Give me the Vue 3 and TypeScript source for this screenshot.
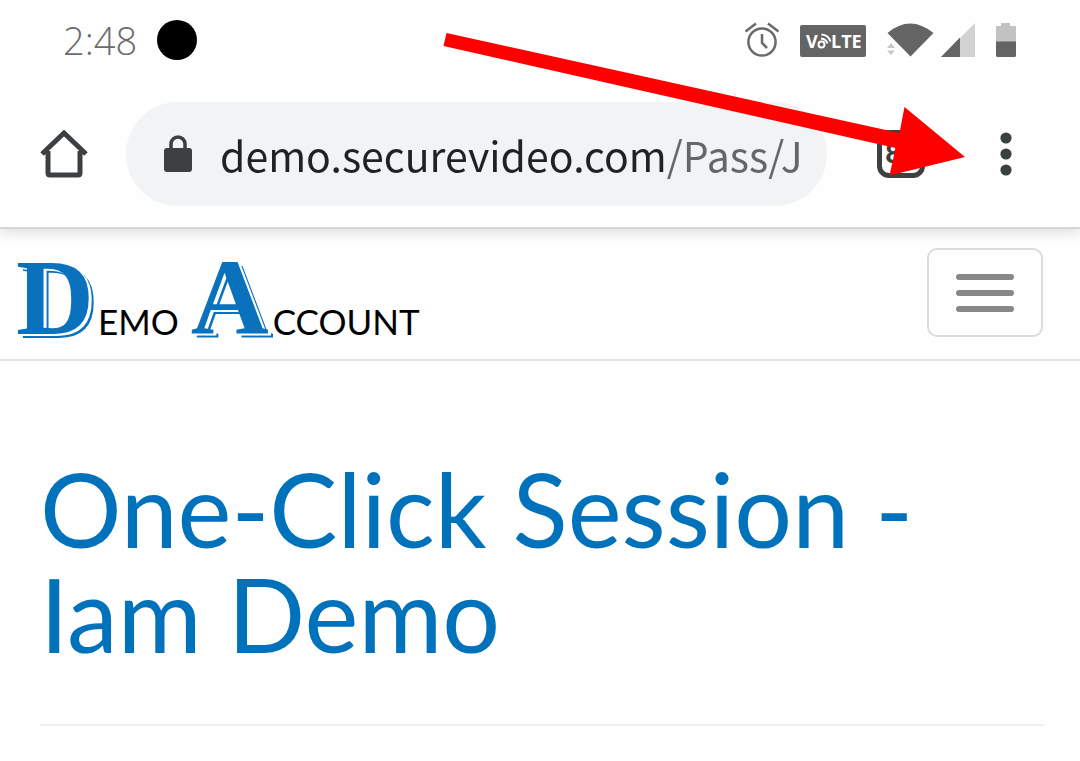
<script setup lang="ts">
import { ref } from 'vue'

const time = '2:48'
const url = ref('demo.securevideo.com/Pass/J')
const openTabs = 8
const title = 'One-Click Session - Iam Demo'
const logoWords = [
  { initial: 'D', rest: 'EMO' },
  { initial: 'A', rest: 'CCOUNT' },
]
</script>

<template>
  <div class="screen">
    <header class="chrome">
      <div class="status">
        <span class="time">{{ time }}</span>
        <span class="camera"></span>
        <div class="indicators">
          <svg class="alarm" viewBox="0 0 36 36" aria-hidden="true">
            <circle cx="18" cy="20" r="13.6" />
            <path d="M18 12v9l5 5M1.500 9.500L12 1.500M24 1.500L34.500 9.500" />
          </svg>
          <svg class="volte" viewBox="0 0 66 34" aria-hidden="true">
            <rect y="2" width="66" height="32" rx="2" fill="#646464" stroke="none" />
            <text x="6" y="25">V</text>
            <text x="31" y="25">LTE</text>
            <circle cx="21.500" cy="21.500" r="3" />
            <path d="M21 15.500q5 .5 6.500 5M21.500 11.500q7 .5 9 7" />
          </svg>
          <svg class="wifi" viewBox="0 0 48 36" aria-hidden="true">
            <path d="M1.500 11Q24-8 47.500 11L24.500 34.500z" fill="#646464" />
            <path d="M1 26l4-5 4 5zM1 28.500h8l-4 4.500z" fill="#c8c8c8" />
          </svg>
          <svg class="signal" viewBox="0 0 36 36" aria-hidden="true">
            <path d="M1 35L35 1v34z" fill="#d2d2d2" />
            <path d="M1 35L20 15.500V35z" fill="#646464" />
          </svg>
          <svg class="battery" viewBox="0 0 20 36" aria-hidden="true">
            <path d="M5 1h9v3h6v16H0V4h5z" fill="#c2c2c2" />
            <path d="M0 19.500h20V34l-1 1H1l-1-1z" fill="#646464" />
          </svg>
        </div>
      </div>

      <div class="toolbar">
        <button class="icon-button" type="button" aria-label="Home">
          <svg class="home" viewBox="0 0 48 48" aria-hidden="true">
            <path d="M2 24L24 3l22 21M8 21v22q0 2 2 2h28q2 0 2-2V21" />
          </svg>
        </button>
        <div class="address">
          <svg class="lock" viewBox="0 0 28 38" aria-hidden="true">
            <rect y="13" width="28" height="24" rx="3" fill="#3c4043" />
            <path d="M7 14V9a7 7 0 0 1 14 0v5" fill="none" stroke="#3c4043" stroke-width="3.500" />
          </svg>
          <input v-model="url" class="url" type="text" aria-label="Address" />
        </div>
        <button class="icon-button tabs" type="button" aria-label="Open tabs">{{ openTabs }}</button>
        <button class="icon-button" type="button" aria-label="Menu">
          <svg class="dots" viewBox="0 0 12 44" aria-hidden="true">
            <circle cx="6" cy="6" r="5.600" />
            <circle cx="6" cy="22" r="5.600" />
            <circle cx="6" cy="38" r="5.600" />
          </svg>
        </button>
      </div>

      <svg class="pointer" viewBox="0 0 526 146" aria-hidden="true">
        <path d="M6.500 1L459.500 101L464.500 75L525 125L449.500 143.500L455.500 116L3.500 14z" fill="#ff0000" />
      </svg>
    </header>

    <nav class="site-bar">
      <a class="logo" href="#" aria-label="Demo Account">
        <span v-for="word in logoWords" :key="word.initial" class="word">
          <span class="initial">{{ word.initial }}</span>
          <span class="rest">{{ word.rest }}</span>
        </span>
      </a>
      <button class="toggle" type="button" aria-label="Toggle navigation">
        <span class="bar"></span>
        <span class="bar"></span>
        <span class="bar"></span>
      </button>
    </nav>

    <main class="content">
      <h1>{{ title }}</h1>
      <hr />
    </main>
  </div>
</template>

<style scoped>
.screen {
  min-height: 100vh;
  background: #fefefe;
  font-family: Lato, "Liberation Sans", sans-serif;
}

.chrome {
  position: relative;
  z-index: 1;
  border-bottom: 2px solid #d6d6d6;
  background: #fefefe;
  box-shadow: 0 2px 14px rgba(0, 0, 0, 0.16);
}

.status {
  display: flex;
  align-items: center;
  height: 80px;
  padding: 0 64px 0 63px;
}

.time {
  color: #6b6b6b;
  font-family: "Open Sans", "Noto Sans", sans-serif;
  font-size: 38px;
  font-weight: 300;
}

.camera {
  width: 40px;
  height: 40px;
  margin-left: 20px;
  border-radius: 50%;
  background: #000;
}

.indicators {
  display: flex;
  align-items: center;
  margin-left: auto;
}

.alarm {
  width: 36px;
  height: 36px;
  margin-right: 20px;
  fill: none;
  stroke: #6a6a6a;
  stroke-width: 2.5;
}

.volte {
  width: 66px;
  height: 34px;
  margin-right: 20px;
  fill: none;
  stroke: #fff;
  stroke-width: 2;
}

.volte text {
  fill: #fff;
  stroke: none;
  font-family: "Open Sans", sans-serif;
  font-size: 18px;
  font-weight: 700;
}

.wifi {
  width: 48px;
  height: 36px;
  margin-right: 6px;
}

.signal {
  width: 36px;
  height: 36px;
  margin-right: 20px;
}

.battery {
  width: 20px;
  height: 36px;
}

.toolbar {
  display: flex;
  align-items: center;
  height: 147px;
  box-sizing: border-box;
  padding: 0 68px 0 40px;
}

button {
  padding: 0;
  border: 0;
  background: none;
}

.icon-button {
  display: flex;
  flex: none;
  align-items: center;
  justify-content: center;
}

.home {
  width: 48px;
  height: 48px;
  fill: none;
  stroke: #3c4043;
  stroke-width: 5;
}

.address {
  display: flex;
  flex: 1;
  align-items: center;
  min-width: 0;
  height: 104px;
  box-sizing: border-box;
  margin: 0 50px 0 38px;
  padding: 0 16px 0 38px;
  border-radius: 52px;
  background: #f1f3f4;
}

.lock {
  flex: none;
  width: 28px;
  height: 38px;
}

.url {
  flex: 1;
  min-width: 0;
  margin-left: 28px;
  padding: 0;
  border: 0;
  outline: 0;
  background: linear-gradient(90deg, #202124 447px, #63676b 447px);
  background-clip: text;
  color: transparent;
  font-family: "Noto Sans CJK SC", "Noto Sans", sans-serif;
  font-size: 41px;
  line-height: 60px;
}

.tabs {
  width: 48px;
  height: 48px;
  box-sizing: border-box;
  margin-right: 75px;
  padding-right: 16px;
  border: 5px solid #3c4043;
  border-radius: 12px;
  color: #3c4043;
  font-family: Roboto, sans-serif;
  font-size: 28px;
  font-weight: 700;
}

.dots {
  width: 12px;
  height: 44px;
  fill: #3c4043;
}

.pointer {
  position: absolute;
  top: 32px;
  right: 114px;
  width: 526px;
  height: 146px;
  pointer-events: none;
}

.site-bar {
  display: flex;
  align-items: flex-start;
  justify-content: space-between;
  height: 130px;
  padding: 0 37px 0 16px;
  border-bottom: 2px solid #e4e4e4;
}

.logo {
  display: flex;
  gap: 12px;
  margin-top: 9px;
  color: #000;
  text-decoration: none;
}

.word {
  display: flex;
  align-items: flex-end;
  gap: 4px;
}

.initial {
  color: #0a72bd;
  font-family: "Liberation Serif", serif;
  font-size: 108px;
  font-weight: 700;
  line-height: 120px;
  text-shadow: 3px 2px 0 #fff, 5px 4px 0 #0a72bd;
}

.rest {
  font-size: 35px;
  line-height: 74px;
}

.toggle {
  display: flex;
  flex-direction: column;
  align-items: center;
  justify-content: center;
  gap: 10px;
  width: 116px;
  height: 89px;
  box-sizing: border-box;
  margin-top: 19px;
  border: 2px solid #dcdcdc;
  border-radius: 10px;
}

.bar {
  width: 58px;
  height: 6px;
  border-radius: 3px;
  background: #888;
}

.content {
  padding: 95px 36px 36px 40px;
}

h1 {
  margin: 0;
  color: #0072bc;
  font-size: 102px;
  font-weight: 400;
  line-height: 105px;
}

hr {
  height: 2px;
  margin: 58px 0 0;
  border: 0;
  background: #eee;
}
</style>
